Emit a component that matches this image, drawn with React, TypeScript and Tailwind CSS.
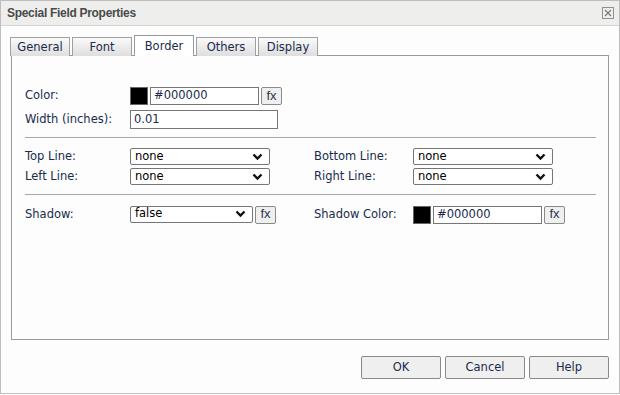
import React from 'react';

const FONT = { fontFamily: '"DejaVu Sans", Verdana, sans-serif' };
const TITLE_FONT = { fontFamily: '"Liberation Sans", Arial, sans-serif' };

const TABS = ['General', 'Font', 'Border', 'Others', 'Display'];

function Chevron() {
  return (
    <svg width="11" height="8" viewBox="0 0 11 8" className="shrink-0">
      <path d="M1.5 1.5 L5.5 5.5 L9.5 1.5" fill="none" stroke="#111" strokeWidth="2.4" />
    </svg>
  );
}

function Select({ value, width }: { value: string; width: string }) {
  return (
    <div className={`${width} h-[17px] flex items-center justify-between border border-[#767676] rounded-[2px] bg-white pl-[4px] pr-[6px] text-[11.5px] text-black`}>
      <span>{value}</span>
      <Chevron />
    </div>
  );
}

function Fx() {
  return (
    <div
      className="w-[21px] h-[18px] flex items-center justify-center border border-[#8a8a8a] rounded-[2px] bg-[#efefef] text-[13px] font-normal text-[#2a3550] leading-none pb-[2px]"
      style={TITLE_FONT}
    >
      fx
    </div>
  );
}

function ColorField() {
  return (
    <div className="flex items-start gap-[2px]">
      <div className="w-[18px] h-[18px] bg-black border border-[#666]" />
      <div className="w-[109px] h-[18px] flex items-center border border-[#767676] bg-white px-[3px] text-[11.5px] text-[#1a2b4c]">#000000</div>
      <Fx />
    </div>
  );
}

export default function App() {
  return (
    <div className="w-[620px] h-[395px] bg-white text-[#1a2b4c] overflow-hidden" style={FONT}>
      <div className="w-[620px] h-[394px] border border-[#bdbdbd] flex flex-col bg-[#fcfdfc]">
        {/* title bar */}
        <div className="h-[25px] shrink-0 bg-[#eeefed] border-b border-[#d6d6d4] flex items-center justify-between pl-[6px] pr-[5px]">
          <span className="text-[12px] font-bold text-[#4a4a4a] tracking-[-0.3px]" style={TITLE_FONT}>Special Field Properties</span>
          <div className="w-[12px] h-[12px] border border-[#8f8f8f] flex items-center justify-center">
            <svg width="8" height="8" viewBox="0 0 8 8">
              <path d="M1 1 L7 7 M7 1 L1 7" stroke="#7a7a7a" strokeWidth="1.2" />
            </svg>
          </div>
        </div>

        <div className="flex-1 flex flex-col pl-[9px] pr-[10px] pt-[9px]">
          {/* tabs */}
          <div className="flex items-end gap-[2px] h-[21px] relative z-10">
            {TABS.map((t) =>
              t === 'Border' ? (
                <div key={t} className="w-[60px] h-[21px] border border-b-0 border-[#999] bg-white flex items-center justify-center pt-[1px] text-[11.5px] text-[#1a2b4c]">
                  {t}
                </div>
              ) : (
                <div key={t} className="w-[60px] h-[19px] border border-b-0 border-[#a0a0a0] bg-gradient-to-b from-[#fafafa] to-[#dedede] flex items-center justify-center pt-[1px] text-[11.5px] text-[#1a2b4c]">
                  {t}
                </div>
              )
            )}
          </div>

          {/* panel */}
          <div className="h-[285px] border border-[#999] ml-[1px] -mt-[1px] bg-[#fcfdfc] pl-[13px] pr-[12px] pt-[31px]">
            <div className="flex items-center h-[18px]">
              <span className="w-[105px] text-[11.5px]">Color:</span>
              <ColorField />
            </div>
            <div className="flex items-center h-[19px] mt-[5px]">
              <span className="w-[105px] text-[11.5px]">Width (inches):</span>
              <div className="w-[148px] h-[19px] flex items-center border border-[#767676] bg-white px-[3px] text-[11.5px] text-[#1a2b4c]">0.01</div>
            </div>

            <div className="h-px bg-[#a8a8a8] mt-[8px]" />

            <div className="flex mt-[10px]">
              <div className="w-[289px] flex flex-col gap-[3px]">
                <div className="flex items-center">
                  <span className="w-[105px] text-[11.5px]">Top Line:</span>
                  <Select value="none" width="w-[140px]" />
                </div>
                <div className="flex items-center">
                  <span className="w-[105px] text-[11.5px]">Left Line:</span>
                  <Select value="none" width="w-[140px]" />
                </div>
              </div>
              <div className="flex flex-col gap-[3px]">
                <div className="flex items-center">
                  <span className="w-[99px] text-[11.5px]">Bottom Line:</span>
                  <Select value="none" width="w-[140px]" />
                </div>
                <div className="flex items-center">
                  <span className="w-[99px] text-[11.5px]">Right Line:</span>
                  <Select value="none" width="w-[140px]" />
                </div>
              </div>
            </div>

            <div className="h-px bg-[#a8a8a8] mt-[8px]" />

            <div className="flex mt-[11px]">
              <div className="w-[289px] flex items-center">
                <span className="w-[105px] text-[11.5px]">Shadow:</span>
                <div className="flex items-start gap-[2px]">
                  <Select value="false" width="w-[123px]" />
                  <Fx />
                </div>
              </div>
              <div className="flex items-center">
                <span className="w-[99px] text-[11.5px]">Shadow Color:</span>
                <ColorField />
              </div>
            </div>
          </div>

          {/* buttons */}
          <div className="flex justify-end gap-[4px] mt-[16px]">
            {['OK', 'Cancel', 'Help'].map((b) => (
              <div key={b} className="w-[80px] h-[23px] border border-[#8a8a8a] rounded-[2px] bg-[#efefef] flex items-center justify-center text-[11.5px] text-[#1a2b4c]">
                {b}
              </div>
            ))}
          </div>
        </div>
      </div>
    </div>
  );
}
